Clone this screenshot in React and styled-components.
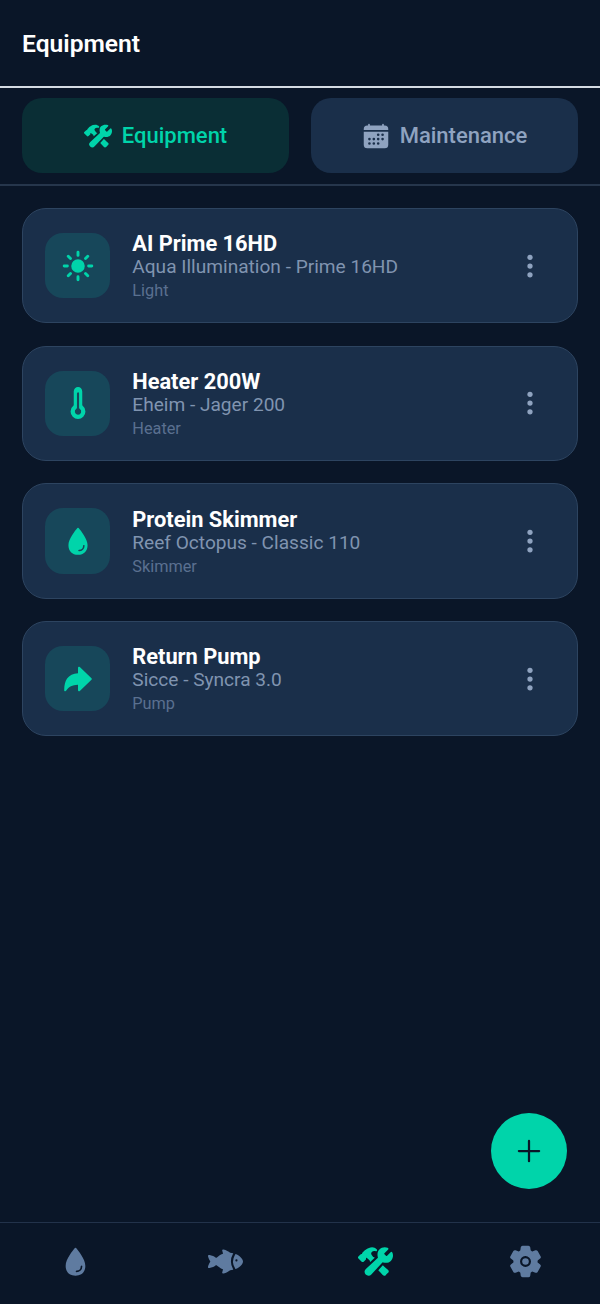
import React from "react";
import styled, { createGlobalStyle } from "styled-components";
import {
  IoConstruct,
  IoCalendar,
  IoSunny,
  IoThermometer,
  IoWater,
  IoArrowRedo,
  IoEllipsisVertical,
  IoAdd,
  IoFish,
  IoSettings,
} from "react-icons/io5";

const equipment = [
  { name: "AI Prime 16HD", model: "Aqua Illumination - Prime 16HD", type: "Light", Icon: IoSunny },
  { name: "Heater 200W", model: "Eheim - Jager 200", type: "Heater", Icon: IoThermometer },
  { name: "Protein Skimmer", model: "Reef Octopus - Classic 110", type: "Skimmer", Icon: IoWater },
  { name: "Return Pump", model: "Sicce - Syncra 3.0", type: "Pump", Icon: IoArrowRedo },
];

export default function App() {
  return (
    <>
      <GlobalStyle />
      <Screen>
        <Header>
          <Title>Equipment</Title>
        </Header>
        <Tabs>
          <Tab $active>
            <IoConstruct size={28} />
            Equipment
          </Tab>
          <Tab>
            <IoCalendar size={28} />
            Maintenance
          </Tab>
        </Tabs>
        <List>
          {equipment.map(({ name, model, type, Icon }) => (
            <Card key={name}>
              <IconBox>
                <Icon size={34} />
              </IconBox>
              <Info>
                <Name>{name}</Name>
                <Model>{model}</Model>
                <Type>{type}</Type>
              </Info>
              <MoreButton>
                <IoEllipsisVertical size={28} />
              </MoreButton>
            </Card>
          ))}
        </List>
        <Fab>
          <IoAdd size={36} />
        </Fab>
        <BottomNav>
          <NavItem><IoWater size={35} /></NavItem>
          <NavItem><IoFish size={35} /></NavItem>
          <NavItem $active><IoConstruct size={35} /></NavItem>
          <NavItem><IoSettings size={35} /></NavItem>
        </BottomNav>
      </Screen>
    </>
  );
}

const GlobalStyle = createGlobalStyle`
  html, body {
    margin: 0;
    padding: 0;
    background: #0a1628;
  }
  * {
    box-sizing: border-box;
  }
`;

const Screen = styled.div`
  position: relative;
  display: flex;
  flex-direction: column;
  width: 600px;
  height: 1304px;
  overflow: hidden;
  background: #0a1628;
  font-family: Roboto, "Liberation Sans", sans-serif;
`;

const Header = styled.header`
  display: flex;
  align-items: center;
  height: 88px;
  padding: 0 22px;
  border-bottom: 2px solid #d4dbe2;
`;

const Title = styled.h1`
  margin: 0;
  font-size: 24.6px;
  font-weight: 600;
  color: #ffffff;
`;

const Tabs = styled.div`
  display: grid;
  grid-template-columns: 1fr 1fr;
  gap: 22px;
  height: 98px;
  padding: 10px 22px 11px;
  border-bottom: 2px solid #26364c;
`;

const Tab = styled.div`
  display: flex;
  align-items: center;
  justify-content: center;
  gap: 10px;
  border-radius: 20px;
  font-size: 22px;
  font-weight: 500;
  background: ${(p) => (p.$active ? "#0a2e35" : "#1a2f4a")};
  color: ${(p) => (p.$active ? "#00d4aa" : "#8fa3c0")};
`;

const List = styled.main`
  display: flex;
  flex: 1;
  flex-direction: column;
  gap: 22.4px;
  padding: 22px 22px 0;
`;

const Card = styled.article`
  display: flex;
  align-items: center;
  height: 115.3px;
  padding: 0 33px 0 22px;
  border: 1px solid #2d4460;
  border-radius: 24px;
  background: #1a2f4a;
`;

const IconBox = styled.div`
  display: flex;
  align-items: center;
  justify-content: center;
  flex: none;
  width: 65.3px;
  height: 65.3px;
  border-radius: 18px;
  background: #17475a;
  color: #00d4aa;
`;

const Info = styled.div`
  display: flex;
  flex: 1;
  flex-direction: column;
  margin-left: 22px;
`;

const Name = styled.div`
  margin-top: 3px;
  font-size: 21.8px;
  line-height: 25px;
  font-weight: 700;
  color: #ffffff;
`;

const Model = styled.div`
  font-size: 19.1px;
  line-height: 21px;
  color: #8094b0;
`;

const Type = styled.div`
  margin-top: 2px;
  font-size: 16.3px;
  line-height: 24px;
  color: #5a7090;
`;

const MoreButton = styled.div`
  display: flex;
  color: #8fa3c0;
`;

const Fab = styled.button`
  position: absolute;
  right: 33px;
  bottom: 115px;
  display: flex;
  align-items: center;
  justify-content: center;
  width: 76px;
  height: 76px;
  padding: 0;
  border: none;
  border-radius: 50%;
  background: #00d4aa;
  color: #0a1628;
`;

const BottomNav = styled.nav`
  display: grid;
  grid-template-columns: repeat(4, 1fr);
  align-items: center;
  height: 82px;
  padding-bottom: 4px;
  border-top: 1px solid #22324a;
`;

const NavItem = styled.div`
  display: flex;
  justify-content: center;
  color: ${(p) => (p.$active ? "#00d4aa" : "#5f7ba0")};
`;
